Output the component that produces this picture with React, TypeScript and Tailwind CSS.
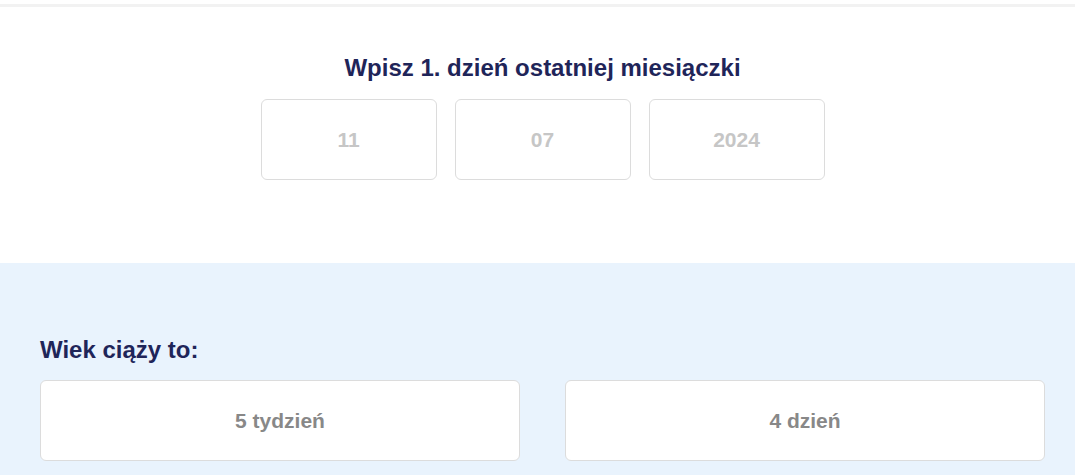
import React from 'react';

const dateParts = ['11', '07', '2024'];
const results = ['5 tydzień', '4 dzień'];

const App: React.FC = () => {
  return (
    <div className="min-h-[475px] bg-white font-['Liberation_Sans',Arial,sans-serif]">
      <div className="h-[4px]" />
      <div className="h-[3px] bg-[#f2f2f2]" />
      <section className="flex flex-col items-center pl-[40px] pr-[30px] pt-[47px] pb-[83px]">
        <h1 className="text-[24px] leading-[28px] font-bold text-[#1f2559]">
          Wpisz 1. dzień ostatniej miesiączki
        </h1>
        <div className="mt-[17px] flex gap-[18px]">
          {dateParts.map((part) => (
            <div
              key={part}
              className="flex h-[81px] w-[176px] items-center justify-center rounded-[6px] border border-[#dcdcdc] bg-white text-[21px] font-bold text-[#c6c6c6]"
            >
              {part}
            </div>
          ))}
        </div>
      </section>
      <section className="bg-[#e9f3fd] pl-[40px] pr-[30px] pt-[73px] pb-[20px]">
        <h2 className="text-[24px] leading-[28px] font-bold text-[#1f2559]">Wiek ciąży to:</h2>
        <div className="mt-[16px] flex gap-[45px]">
          {results.map((r) => (
            <div
              key={r}
              className="flex h-[81px] flex-1 items-center justify-center rounded-[6px] border border-[#dcdcdc] bg-white text-[21px] font-bold text-[#888888]"
            >
              {r}
            </div>
          ))}
        </div>
      </section>
    </div>
  );
};

export default App;
